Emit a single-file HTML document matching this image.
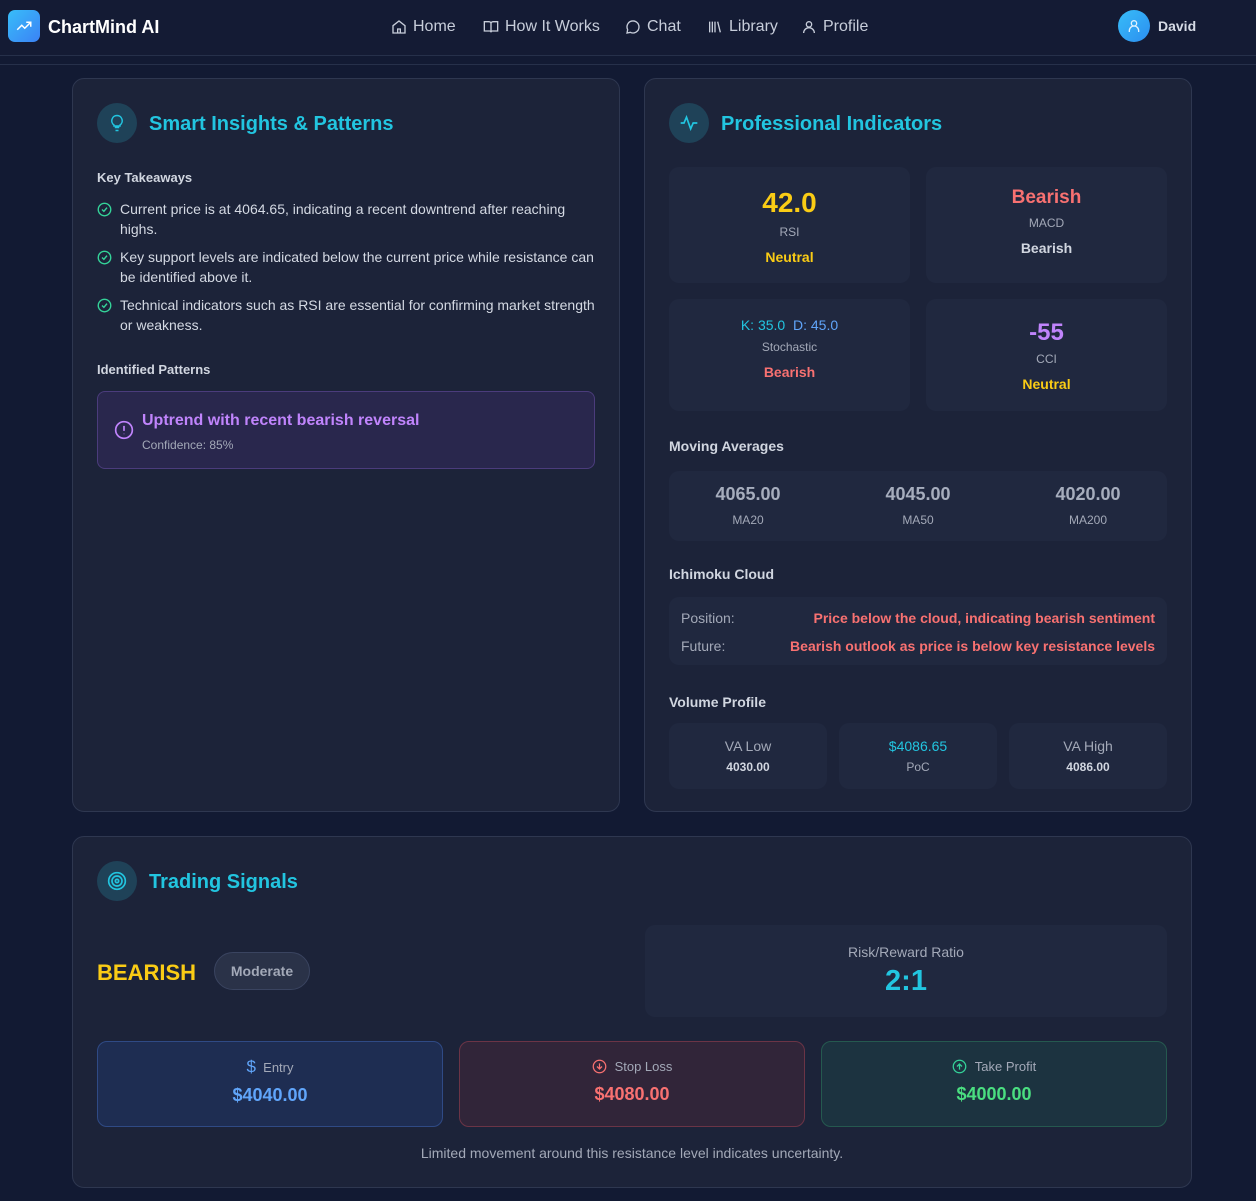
<!DOCTYPE html>
<html><head><meta charset="utf-8"><style>
*{box-sizing:border-box;margin:0;padding:0}
body{width:1256px;height:1201px;background:#121a33;font-family:"Liberation Sans",sans-serif;position:relative;overflow:hidden;color:#cbd5e1}
.a{position:absolute}
.nav{left:0;top:0;width:1256px;height:56px;background:#141b34;border-bottom:1px solid #26304a}
.card{background:#1c2339;border:1px solid #2e3750;border-radius:12px}
.box{background:#20283f;border-radius:10px}
.ic{width:40px;height:40px;border-radius:50%;background:#1f4258;display:flex;align-items:center;justify-content:center}
.h{font-size:20px;font-weight:bold;color:#22c5e0}
.sub{font-size:14px;font-weight:bold;color:#d1d6e0}
.c{text-align:center}
.navi{font-size:16px;color:#c7cdda;display:flex;align-items:center;gap:6px}
.li{display:flex;gap:8px;font-size:14px;line-height:20px;color:#d4d9e3}
</style></head><body>
<div class="a nav"></div>
<div class="a" style="left:0;top:64px;width:1256px;height:1px;background:#26304a"></div>
<div class="a" style="left:8px;top:10px;width:32px;height:32px;border-radius:7px;background:linear-gradient(135deg,#38bdf8,#3b82f6);display:flex;align-items:center;justify-content:center"><svg width="18" height="18" viewBox="0 0 24 24" fill="none" stroke="#fff" stroke-width="2"><path d="M3 17l6-6 4 4 8-8M15 7h6v6"/></svg></div>
<div class="a" style="left:48px;top:17px;font-size:18px;font-weight:bold;color:#fff">ChartMind AI</div>
<div class="a navi" style="left:391px;top:18px"><svg width="16" height="16" viewBox="0 0 24 24" fill="none" stroke="#c7cdda" stroke-width="2"><path d="M3 10l9-7 9 7v11H3zM10 21v-6h4v6"/></svg>Home</div>
<div class="a navi" style="left:483px;top:18px"><svg width="16" height="16" viewBox="0 0 24 24" fill="none" stroke="#c7cdda" stroke-width="2"><path d="M2 4h7a3 3 0 013 3v13a2 2 0 00-2-2H2zM22 4h-7a3 3 0 00-3 3v13a2 2 0 012-2h8z"/></svg>How It Works</div>
<div class="a navi" style="left:625px;top:18px"><svg width="16" height="16" viewBox="0 0 24 24" fill="none" stroke="#c7cdda" stroke-width="2"><path d="M21 12a9 9 0 01-13 8l-5 1 1-5a9 9 0 1117-4z"/></svg>Chat</div>
<div class="a navi" style="left:707px;top:18px"><svg width="16" height="16" viewBox="0 0 24 24" fill="none" stroke="#c7cdda" stroke-width="2"><path d="M4 4v16M8 4v16M12 4v16M16 4l4 16"/></svg>Library</div>
<div class="a navi" style="left:801px;top:18px"><svg width="16" height="16" viewBox="0 0 24 24" fill="none" stroke="#c7cdda" stroke-width="2"><circle cx="12" cy="8" r="4"/><path d="M4 21a8 8 0 0116 0"/></svg>Profile</div>
<div class="a" style="left:1118px;top:10px;width:32px;height:32px;border-radius:50%;background:linear-gradient(135deg,#38bdf8,#2b8ef0);display:flex;align-items:center;justify-content:center"><svg width="16" height="16" viewBox="0 0 24 24" fill="none" stroke="#e0f2fe" stroke-width="2"><circle cx="12" cy="8" r="4"/><path d="M5 21v-2a7 7 0 0114 0v2"/></svg></div>
<div class="a" style="left:1158px;top:18px;font-size:14px;font-weight:bold;color:#d6dbe6">David</div>

<div class="a card" style="left:72px;top:78px;width:548px;height:734px"></div>
<div class="a ic" style="left:97px;top:103px"><svg width="18" height="18" viewBox="0 0 24 24" fill="none" stroke="#22c5e0" stroke-width="2"><path d="M9 18h6M10 22h4M12 2a7 7 0 00-4 12.7V16h8v-1.3A7 7 0 0012 2z"/></svg></div>
<div class="a h" style="left:149px;top:113px">Smart Insights &amp; Patterns</div>
<div class="a sub" style="left:97px;top:170px;font-size:13px">Key Takeaways</div>
<div class="a" style="left:97px;top:199px;width:500px">
<div class="li"><svg style="flex:none;margin-top:3px" width="15" height="15" viewBox="0 0 24 24" fill="none" stroke="#34d399" stroke-width="2.2"><circle cx="12" cy="12" r="10"/><path d="M8 12l3 3 5-6"/></svg><span>Current price is at 4064.65, indicating a recent downtrend after reaching highs.</span></div>
<div class="li" style="margin-top:8px"><svg style="flex:none;margin-top:3px" width="15" height="15" viewBox="0 0 24 24" fill="none" stroke="#34d399" stroke-width="2.2"><circle cx="12" cy="12" r="10"/><path d="M8 12l3 3 5-6"/></svg><span>Key support levels are indicated below the current price while resistance can be identified above it.</span></div>
<div class="li" style="margin-top:8px"><svg style="flex:none;margin-top:3px" width="15" height="15" viewBox="0 0 24 24" fill="none" stroke="#34d399" stroke-width="2.2"><circle cx="12" cy="12" r="10"/><path d="M8 12l3 3 5-6"/></svg><span>Technical indicators such as RSI are essential for confirming market strength or weakness.</span></div>
</div>
<div class="a sub" style="left:97px;top:362px;font-size:13px">Identified Patterns</div>
<div class="a" style="left:97px;top:391px;width:498px;height:78px;border-radius:8px;background:#29274d;border:1px solid #4b3c7c"></div>
<div class="a" style="left:114px;top:420px"><svg width="20" height="20" viewBox="0 0 24 24" fill="none" stroke="#c084fc" stroke-width="2"><circle cx="12" cy="12" r="10"/><path d="M12 7v6M12 16.5v.5"/></svg></div>
<div class="a" style="left:142px;top:412px;font-size:16px;font-weight:bold;color:#c084fc">Uptrend with recent bearish reversal</div>
<div class="a" style="left:142px;top:438px;font-size:12px;color:#a3a9b8">Confidence: 85%</div>

<div class="a card" style="left:644px;top:78px;width:548px;height:734px"></div>
<div class="a ic" style="left:669px;top:103px"><svg width="20" height="20" viewBox="0 0 24 24" fill="none" stroke="#22c5e0" stroke-width="2"><path d="M2 12h4l3-7 5 14 3-7h5"/></svg></div>
<div class="a h" style="left:721px;top:113px">Professional Indicators</div>
<div class="a box c" style="left:669px;top:167px;width:241px;height:116px"><div style="margin-top:20px;font-size:28px;font-weight:bold;color:#facc15">42.0</div><div style="margin-top:6px;font-size:12px;color:#a3a9b8">RSI</div><div style="margin-top:10px;font-size:14px;font-weight:bold;color:#facc15">Neutral</div></div>
<div class="a box c" style="left:926px;top:167px;width:241px;height:116px"><div style="margin-top:20px;font-size:19px;font-weight:bold;color:#f87171">Bearish</div><div style="margin-top:7px;font-size:12px;color:#a3a9b8">MACD</div><div style="margin-top:10px;font-size:14px;font-weight:bold;color:#d1d6e0">Bearish</div></div>
<div class="a box c" style="left:669px;top:299px;width:241px;height:112px"><div style="margin-top:18px;font-size:14px"><span style="color:#22c5e0">K: 35.0</span>&nbsp;&nbsp;<span style="color:#60a5fa">D: 45.0</span></div><div style="margin-top:7px;font-size:12px;color:#a3a9b8">Stochastic</div><div style="margin-top:10px;font-size:14px;font-weight:bold;color:#f87171">Bearish</div></div>
<div class="a box c" style="left:926px;top:299px;width:241px;height:112px"><div style="margin-top:20px;font-size:24px;font-weight:bold;color:#c084fc">-55</div><div style="margin-top:5px;font-size:12px;color:#a3a9b8">CCI</div><div style="margin-top:10px;font-size:14px;font-weight:bold;color:#facc15">Neutral</div></div>
<div class="a sub" style="left:669px;top:438px;font-size:14px">Moving Averages</div>
<div class="a box" style="left:669px;top:471px;width:498px;height:70px"></div>
<div class="a c" style="left:669px;top:484px;width:158px"><div style="font-size:18px;font-weight:bold;color:#a6adbd">4065.00</div><div style="margin-top:8px;font-size:12px;color:#a3a9b8">MA20</div></div>
<div class="a c" style="left:839px;top:484px;width:158px"><div style="font-size:18px;font-weight:bold;color:#a6adbd">4045.00</div><div style="margin-top:8px;font-size:12px;color:#a3a9b8">MA50</div></div>
<div class="a c" style="left:1009px;top:484px;width:158px"><div style="font-size:18px;font-weight:bold;color:#a6adbd">4020.00</div><div style="margin-top:8px;font-size:12px;color:#a3a9b8">MA200</div></div>
<div class="a sub" style="left:669px;top:566px;font-size:14px">Ichimoku Cloud</div>
<div class="a box" style="left:669px;top:597px;width:498px;height:68px"></div>
<div class="a" style="left:681px;top:610px;font-size:14px;color:#a3a9b8">Position:</div>
<div class="a" style="left:681px;top:638px;font-size:14px;color:#a3a9b8">Future:</div>
<div class="a" style="right:101px;top:610px;font-size:14px;font-weight:bold;color:#f87171">Price below the cloud, indicating bearish sentiment</div>
<div class="a" style="right:101px;top:638px;font-size:14px;font-weight:bold;color:#f87171">Bearish outlook as price is below key resistance levels</div>
<div class="a sub" style="left:669px;top:694px;font-size:14px">Volume Profile</div>
<div class="a box c" style="left:669px;top:723px;width:158px;height:66px;padding-top:15px"><div style="font-size:14px;color:#a3a9b8">VA Low</div><div style="margin-top:6px;font-size:12px;font-weight:bold;color:#d1d6e0">4030.00</div></div>
<div class="a box c" style="left:839px;top:723px;width:158px;height:66px;padding-top:15px"><div style="font-size:14px;color:#22c5e0">$4086.65</div><div style="margin-top:6px;font-size:12px;color:#a3a9b8">PoC</div></div>
<div class="a box c" style="left:1009px;top:723px;width:158px;height:66px;padding-top:15px"><div style="font-size:14px;color:#a3a9b8">VA High</div><div style="margin-top:6px;font-size:12px;font-weight:bold;color:#d1d6e0">4086.00</div></div>

<div class="a card" style="left:72px;top:836px;width:1120px;height:352px"></div>
<div class="a ic" style="left:97px;top:861px"><svg width="20" height="20" viewBox="0 0 24 24" fill="none" stroke="#22c5e0" stroke-width="2"><circle cx="12" cy="12" r="10"/><circle cx="12" cy="12" r="6"/><circle cx="12" cy="12" r="2"/></svg></div>
<div class="a h" style="left:149px;top:871px">Trading Signals</div>
<div class="a" style="left:97px;top:960px;font-size:22px;font-weight:bold;color:#facc15">BEARISH</div>
<div class="a" style="left:214px;top:952px;width:96px;height:38px;border-radius:19px;background:#2a3248;border:1px solid #3a4460;font-size:14px;font-weight:bold;color:#a3a9b8;text-align:center;line-height:36px">Moderate</div>
<div class="a box c" style="left:645px;top:925px;width:522px;height:92px"><div style="margin-top:19px;font-size:14px;color:#a3a9b8">Risk/Reward Ratio</div><div style="margin-top:5px;font-size:29px;font-weight:bold;color:#22c5e0">2:1</div></div>
<div class="a c" style="left:97px;top:1041px;width:346px;height:86px;border-radius:10px;background:#1e2d52;border:1px solid #2f4a85"><div style="margin-top:15px;font-size:13px;color:#a3a9b8"><span style="color:#60a5fa;font-size:17px">$</span>&nbsp;&nbsp;Entry</div><div style="margin-top:8px;font-size:18px;font-weight:bold;color:#60a5fa">$4040.00</div></div>
<div class="a c" style="left:459px;top:1041px;width:346px;height:86px;border-radius:10px;background:#312539;border:1px solid #6b3446"><div style="margin-top:17px;font-size:13px;color:#a3a9b8;display:flex;justify-content:center;align-items:center;gap:8px"><svg width="15" height="15" viewBox="0 0 24 24" fill="none" stroke="#f87171" stroke-width="2"><circle cx="12" cy="12" r="10"/><path d="M12 7v9M8 12l4 4 4-4"/></svg>Stop Loss</div><div style="margin-top:10px;font-size:18px;font-weight:bold;color:#f87171">$4080.00</div></div>
<div class="a c" style="left:821px;top:1041px;width:346px;height:86px;border-radius:10px;background:#1c3340;border:1px solid #25594f"><div style="margin-top:17px;font-size:13px;color:#a3a9b8;display:flex;justify-content:center;align-items:center;gap:8px"><svg width="15" height="15" viewBox="0 0 24 24" fill="none" stroke="#34d399" stroke-width="2"><circle cx="12" cy="12" r="10"/><path d="M12 17V8M8 12l4-4 4 4"/></svg>Take Profit</div><div style="margin-top:10px;font-size:18px;font-weight:bold;color:#4ade80">$4000.00</div></div>
<div class="a c" style="left:72px;top:1145px;width:1120px;font-size:14px;color:#a3a9b8">Limited movement around this resistance level indicates uncertainty.</div>
</body></html>
